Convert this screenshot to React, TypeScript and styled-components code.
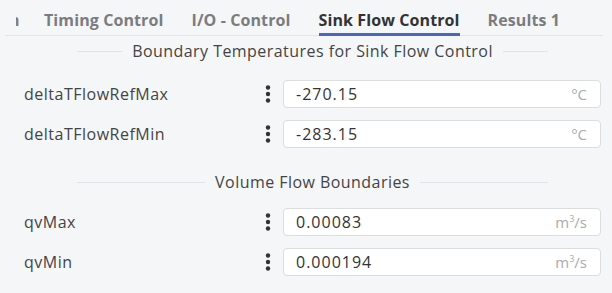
import React from "react";
import styled, { createGlobalStyle } from "styled-components";

const GlobalStyle = createGlobalStyle`
  *, *::before, *::after { box-sizing: border-box; }
  html, body { margin: 0; padding: 0; background: #f5f6f8; }
  body {
    font-family: "Open Sans", "Noto Sans", sans-serif;
    color: #444;
  }
`;

const Page = styled.div`
  width: 612px;
  height: 293px;
  overflow: hidden;
  background: #f5f6f8;
`;

const TabBar = styled.div`
  display: flex;
  align-items: flex-end;
  height: 36px;
  margin: 0 9px 0 5px;
  padding-left: 11px;
  border-bottom: 1px solid #e4e5e8;
  gap: 28px;
`;

const Tab = styled.div<{ $active?: boolean }>`
  position: relative;
  height: 35px;
  display: flex;
  align-items: center;
  padding-top: 5px;
  font-size: 16px;
  font-weight: 700;
  letter-spacing: 0.1px;
  white-space: nowrap;
  color: ${(p) => (p.$active ? "#333" : "#7b7c80")};
  &::after {
    content: "";
    display: ${(p) => (p.$active ? "block" : "none")};
    position: absolute;
    left: 0;
    right: 0;
    bottom: -1px;
    height: 3px;
    background: #4767c2;
  }
`;

/* the tab before "Timing Control" is scrolled out; only the edge of its last letter shows */
const ClippedTab = styled.div`
  flex: 0 0 4px;
  height: 35px;
  overflow: hidden;
  padding-top: 5px;
  line-height: 30px;
  font-size: 16px;
  font-weight: 700;
  white-space: nowrap;
  color: #7b7c80;
  margin-right: -4px;
`;

const ClippedGlyph = styled.span`
  display: inline-block;
  margin-left: -7px;
`;

const Divider = styled.div`
  display: flex;
  align-items: center;
  gap: 10px;
  height: 30px;
  margin-left: 77px;
  width: 471px;
  font-size: 16px;
  letter-spacing: 0.45px;
  color: #444;
  white-space: nowrap;
  &::before,
  &::after {
    content: "";
    flex: 1;
    height: 1px;
    background: #e3e4e7;
  }
`;

const Rows = styled.div<{ $top: number }>`
  display: flex;
  flex-direction: column;
  gap: 12px;
  padding: ${(p) => p.$top}px 11px 0 24px;
`;

const Row = styled.div`
  display: flex;
  align-items: center;
  height: 28px;
`;

const Label = styled.div`
  flex: 1;
  font-size: 16px;
  letter-spacing: 0.5px;
  color: #444;
`;

const Menu = styled.div`
  width: 18px;
  display: flex;
  justify-content: center;
  margin-right: 6px;
`;

const Field = styled.div`
  width: 318px;
  height: 28px;
  display: flex;
  align-items: center;
  padding: 0 13px 0 12px;
  background: #fff;
  border: 1px solid #dcdde0;
  border-radius: 4px;
`;

const Value = styled.div`
  flex: 1;
  font-size: 16px;
  letter-spacing: 1px;
  color: #333;
`;

const Unit = styled.div`
  font-size: 15px;
  color: #a9abaf;
`;

const Sup = styled.sup`
  font-size: 9px;
`;

const Spacer = styled.div<{ $h: number }>`
  height: ${(p) => p.$h}px;
`;

const Dots = () => (
  <svg width="6" height="20" viewBox="0 0 6 20">
    <circle cx="3" cy="3.5" r="2.2" fill="#333" />
    <circle cx="3" cy="10" r="2.2" fill="#333" />
    <circle cx="3" cy="16.5" r="2.2" fill="#333" />
  </svg>
);

const Cube = () => (
  <>
    m<Sup>3</Sup>/s
  </>
);

type Param = { name: string; value: string; unit: React.ReactNode };

const temps: Param[] = [
  { name: "deltaTFlowRefMax", value: "-270.15", unit: "°C" },
  { name: "deltaTFlowRefMin", value: "-283.15", unit: "°C" },
];

const flows: Param[] = [
  { name: "qvMax", value: "0.00083", unit: <Cube /> },
  { name: "qvMin", value: "0.000194", unit: <Cube /> },
];

const ParamRow = ({ p }: { p: Param }) => (
  <Row>
    <Label>{p.name}</Label>
    <Menu>
      <Dots />
    </Menu>
    <Field>
      <Value>{p.value}</Value>
      <Unit>{p.unit}</Unit>
    </Field>
  </Row>
);

const App: React.FC = () => {
  return (
    <>
      <GlobalStyle />
      <Page>
        <TabBar>
          <ClippedTab>
            <ClippedGlyph>n</ClippedGlyph>
          </ClippedTab>
          <Tab>Timing Control</Tab>
          <Tab>I/O - Control</Tab>
          <Tab $active>Sink Flow Control</Tab>
          <Tab>Results 1</Tab>
        </TabBar>
        <Divider>Boundary Temperatures for Sink Flow Control</Divider>
        <Rows $top={14}>
          {temps.map((p) => (
            <ParamRow key={p.name} p={p} />
          ))}
        </Rows>
        <Spacer $h={19} />
        <Divider>Volume Flow Boundaries</Divider>
        <Rows $top={11}>
          {flows.map((p) => (
            <ParamRow key={p.name} p={p} />
          ))}
        </Rows>
      </Page>
    </>
  );
};

export default App;
